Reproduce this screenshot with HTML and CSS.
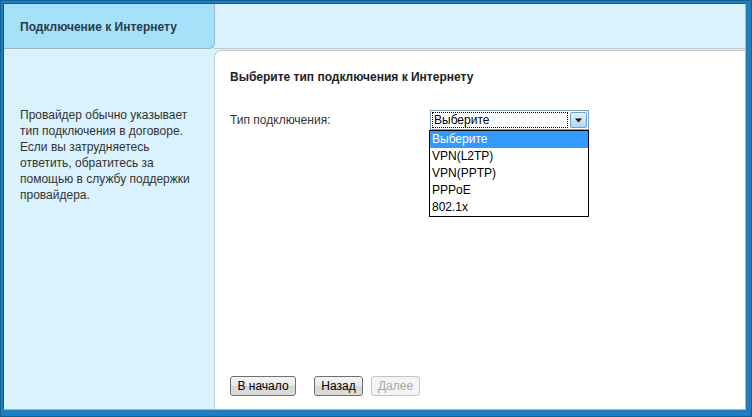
FILE: index.html
```html
<!DOCTYPE html>
<html lang="ru">
<head>
<meta charset="utf-8">
<title>Подключение к Интернету</title>
<link rel="stylesheet" href="styles.css">
</head>
<body>
<div class="frame">
  <div class="app">
    <div class="tab">Подключение к Интернету</div>
    <div class="strip"></div>
    <div class="side">
      <p class="hint">Провайдер обычно указывает<br>тип подключения в договоре.<br>Если вы затрудняетесь<br>ответить, обратитесь за<br>помощью в службу поддержки<br>провайдера.</p>
    </div>
    <div class="panel">
      <h1 class="title">Выберите тип подключения к Интернету</h1>
      <div class="row">
        <span class="label">Тип подключения:</span>
        <div class="select">
          <div class="select-box">
            <span class="select-value">Выберите</span>
            <span class="select-arrow"><svg width="9" height="5" viewBox="0 0 9 5"><path d="M1 0.5 H8 L4.5 4.5 Z" fill="#111"/></svg></span>
          </div>
          <ul class="options">
            <li class="opt active">Выберите</li>
            <li class="opt">VPN(L2TP)</li>
            <li class="opt">VPN(PPTP)</li>
            <li class="opt">PPPoE</li>
            <li class="opt">802.1x</li>
          </ul>
        </div>
      </div>
      <div class="buttons">
        <button class="btn btn-start">В начало</button>
        <button class="btn btn-back">Назад</button>
        <button class="btn btn-next" disabled>Далее</button>
      </div>
    </div>
  </div>
</div>
</body>
</html>
```
FILE: styles.css
```css
html, body {
  margin: 0;
  padding: 0;
}
body {
  width: 752px;
  height: 417px;
  overflow: hidden;
  font-family: "Liberation Sans", Arial, sans-serif;
  font-size: 12px;
  color: #333;
}
.frame {
  box-sizing: border-box;
  width: 752px;
  height: 417px;
  background: #1f7dc1;
  padding: 4px 6px 7px 4px;
  box-shadow: inset 0 0 0 1px #155f97;
}
.app {
  box-sizing: border-box;
  height: 100%;
  background: #d9f2fd;
  display: grid;
  grid-template-columns: 211px 1fr;
  grid-template-rows: 45px 1fr;
  border-right: 1px solid #a9b9c4;
  border-bottom: 1px solid #a9b9c4;
  box-shadow: -1px -1px 0 #0e5a90;
}
.tab {
  background: #a6e1fa;
  border-right: 1px solid #9bb7c8;
  border-bottom: 1px solid #9bb7c8;
  border-bottom-right-radius: 6px;
  font-weight: bold;
  color: #2a3b4c;
  display: flex;
  align-items: center;
  padding-left: 16px;
  padding-top: 1px;
  box-sizing: border-box;
}
.strip {
  border-bottom: 1px solid #bcc6cd;
  margin-left: -1px;
}
.side {
  padding: 58px 0 0 16px;
}
.hint {
  margin: 0;
  line-height: 16px;
  color: #333;
}
.panel {
  background: #fff;
  border-top: 1px solid #c3c9ce;
  border-left: 1px solid #c3c9ce;
  border-top-left-radius: 7px;
  margin-top: 1px;
  margin-left: -1px;
  padding: 19px 0 13px 15px;
  display: flex;
  flex-direction: column;
}
.title {
  margin: 0;
  font-size: 12px;
  font-weight: bold;
  color: #222;
  line-height: 14px;
}
.row {
  display: flex;
  align-items: center;
  margin-top: 26px;
}
.label {
  width: 200px;
  color: #333;
}
.select {
  position: relative;
  width: 159px;
}
.select-box {
  box-sizing: border-box;
  height: 20px;
  border: 1px solid #7f9db9;
  display: flex;
  background: #fff;
}
.select-value {
  flex: 1;
  margin: 1px;
  border: 1px dotted #000;
  color: #000;
  font-size: 12px;
  line-height: 14px;
  padding-left: 1px;
}
.select-arrow {
  width: 15px;
  margin: 1px;
  background: linear-gradient(#e4f2fc, #b0d6f2);
  border: 1px solid #6f9fc9;
  border-radius: 2px;
  display: flex;
  align-items: center;
  justify-content: center;
}
.options {
  position: absolute;
  top: 20px;
  left: -1px;
  width: 160px;
  box-sizing: border-box;
  margin: 0;
  padding: 0;
  list-style: none;
  border: 1px solid #000;
  background: #fff;
}
.opt {
  height: 17px;
  line-height: 17px;
  padding-left: 2px;
  color: #000;
}
.opt.active {
  background: #3399ff;
  color: #fff;
}
.buttons {
  margin-top: auto;
  display: flex;
}
.btn {
  height: 20px;
  box-sizing: border-box;
  padding: 0 5px;
  font-family: "Liberation Sans", Arial, sans-serif;
  font-size: 12px;
  color: #000;
  border: 1px solid #707070;
  border-radius: 3px;
  background: linear-gradient(#f4f4f4 0%, #e8e8e8 50%, #d6d6d6 51%, #dcdcdc 100%);
}
.btn-start {
  width: 66px;
}
.btn-back {
  width: 49px;
  margin-left: 18px;
}
.btn-next {
  width: 49px;
  margin-left: 8px;
  color: #a8a8a8;
  border-color: #c4c4c4;
  background: #f4f4f4;
}
```
